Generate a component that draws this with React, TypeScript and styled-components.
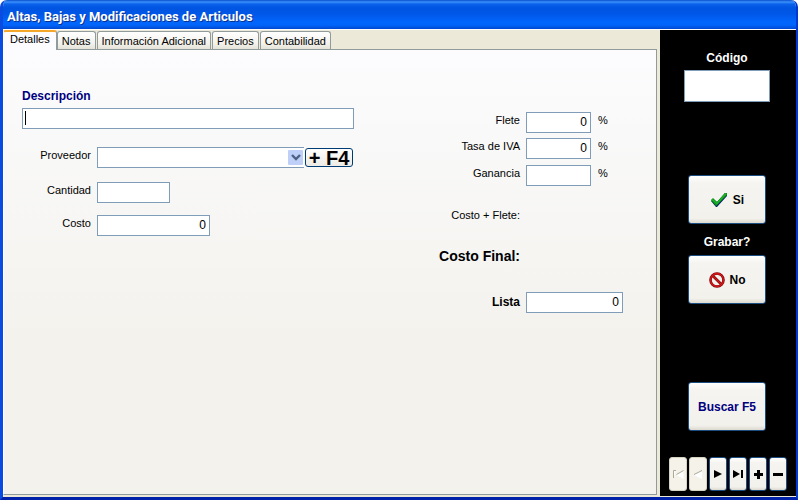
import React from "react";
import styled, { createGlobalStyle, css } from "styled-components";

const uiFont = '"Liberation Sans", Arial, sans-serif';
const line = "#7f9db9";

const Global = createGlobalStyle`
  *, *::before, *::after { box-sizing: border-box; }
  body { margin: 0; background: #fff; font: 12px/16px ${uiFont}; color: #000; }
  button, input, select { font: inherit; color: inherit; }
`;

const Window = styled.div`
  display: flex;
  flex-direction: column;
  min-height: calc(100vh - 1px);
  border: solid #0038d8;
  border-width: 0 2px 3px 3px;
  border-left-color: #0a4be0;
  border-bottom-color: #0022a8;
  border-radius: 7px 7px 0 0;
  background: #ece9d8;
  overflow: hidden;
`;

const TitleBar = styled.header`
  height: 29px;
  margin: 0 -2px 0 -3px;
  padding: 4px 7px 0;
  background: linear-gradient(
    #0a4fd0 0,
    #3c91fa 2px,
    #0b62ec 4px,
    #0055e0 8px,
    #0057e8 14px,
    #0266fc 22px,
    #0265fb 25px,
    #0048d0 29px
  );
`;

const Title = styled.h1`
  margin: 0;
  font: bold 13px/25px Roboto, "Noto Sans", sans-serif;
  color: #fff;
  text-shadow: 1px 1px 0 #0a2f8c;
  white-space: nowrap;
`;

const Body = styled.div`
  flex: 1;
  display: flex;
  gap: 3px;
  border-top: 1px solid #fff;
`;

const Main = styled.main`
  flex: 1;
  min-width: 0;
  display: flex;
  flex-direction: column;
  padding-bottom: 2px;
`;

const TabList = styled.div`
  display: flex;
  align-items: flex-end;
  height: 19px;
  gap: 1px;
`;

const Tab = styled.button<{ $active?: boolean }>`
  height: 18px;
  padding: 2px 4px 0;
  border: 1px solid #919b9c;
  border-bottom: 0;
  border-radius: 3px 3px 0 0;
  background: linear-gradient(#fff, #f2f1ea 70%, #e4e2d8);
  font-size: 11px;
  line-height: 15px;
  white-space: nowrap;
  ${(p) =>
    p.$active &&
    css`
      height: 20px;
      margin: 0 -1px -1px 0;
      padding: 0 6px 3px;
      border-top: 2px solid #f5a72c;
      border-left-color: #fff;
      background: #fcfcfe;
      z-index: 1;
    `}
`;

const Panel = styled.form`
  flex: 1;
  display: flex;
  justify-content: space-between;
  align-items: flex-start;
  gap: 24px;
  padding: 37px 33px 24px 18px;
  border: 1px solid #919b9c;
  border-left-color: #fff;
  background: linear-gradient(#fcfcfe, #f3f2ed 65%, #f3f2ec);
`;

const LeftColumn = styled.div`
  flex: 0 1 332px;
  min-width: 0;
`;

const RightColumn = styled.div`
  padding-top: 25px;
`;

const Heading = styled.label`
  display: block;
  margin-bottom: 3px;
  line-height: 18px;
  font-weight: bold;
  color: #000080;
`;

const Input = styled.input<{ $width?: number; $caret?: boolean }>`
  display: block;
  width: ${(p) => (p.$width ? `${p.$width}px` : "100%")};
  height: 21px;
  padding: 0 3px 2px;
  border: 1px solid ${line};
  border-radius: 0;
  background: #fff;
  text-align: right;
  outline: 0;
  ${(p) =>
    p.$caret &&
    css`
      text-align: left;
      background: linear-gradient(#000, #000) 2px 2px / 1px 14px no-repeat #fff;
    `}
`;

const Field = styled.div<{ $label: number; $space: number }>`
  display: grid;
  grid-template-columns: ${(p) => p.$label}px 1fr;
  column-gap: 6px;
  margin-top: ${(p) => p.$space}px;
`;

const Label = styled.label<{ $size?: "strong" | "large" }>`
  font-size: 11px;
  line-height: 16px;
  text-align: right;
  white-space: nowrap;
  ${(p) => p.$size && "font-size: 12px; font-weight: bold; line-height: 20px;"}
  ${(p) => p.$size === "large" && "font-size: 14px;"}
`;

const Line = styled.div`
  display: flex;
  align-items: flex-start;
`;

const Unit = styled.span`
  margin-left: 7px;
  font-size: 11px;
`;

const SelectBox = styled.div`
  position: relative;
  flex: 1;
  min-width: 0;
`;

const Select = styled.select`
  display: block;
  appearance: none;
  width: 100%;
  height: 21px;
  padding: 0 20px 0 3px;
  border: 1px solid ${line};
  border-right: 0;
  border-radius: 0;
  background: #fff;
  outline: 0;
`;

const Arrow = styled.svg`
  position: absolute;
  top: 3px;
  right: 1px;
  pointer-events: none;
`;

const KeyButton = styled.button`
  width: 48px;
  height: 19px;
  margin: 1px 1px 0;
  padding: 1px 0 0;
  border: 1px solid #003c74;
  border-radius: 3px;
  background: linear-gradient(#fff, #ecebe5);
  font-size: 20px;
  font-weight: bold;
  line-height: 16px;
  white-space: nowrap;
`;

const Sidebar = styled.aside`
  flex: 0 0 136px;
  display: flex;
  flex-direction: column;
  align-items: center;
  margin-bottom: 1px;
  padding: 19px 2px 5px 0;
  background: #000;
  color: #fff;
  font-weight: bold;
`;

const SideLabel = styled.label`
  line-height: 18px;
`;

const CodeInput = styled.input`
  width: 86px;
  height: 32px;
  margin: 3px 0 73px;
  padding: 0 4px;
  border: 1px solid ${line};
  background: #fff;
  color: #000;
  outline: 0;
`;

const Question = styled.div`
  margin: 9px 0 4px;
  line-height: 18px;
`;

const xpButton = css`
  border: 1px solid #1c4d80;
  border-radius: 3px;
  background: linear-gradient(#fff, #f5f4f0 15%, #f2f1ec 90%, #dcd9ce);
`;

const BigButton = styled.button<{ $search?: boolean }>`
  ${xpButton}
  display: flex;
  flex: none;
  align-items: center;
  justify-content: center;
  gap: 5px;
  width: 78px;
  height: 49px;
  padding: 0;
  margin-top: ${(p) => (p.$search ? "auto" : 0)};
  color: ${(p) => (p.$search ? "#000080" : "#000")};
  white-space: nowrap;
`;

const NavBar = styled.nav`
  display: flex;
  gap: 2px;
  margin: 26px -2px 0 0;
`;

const NavButton = styled.button`
  ${xpButton}
  display: flex;
  align-items: center;
  justify-content: center;
  width: 18px;
  height: 34px;
  padding: 0;
  &:disabled {
    border-color: #d5d2c4;
    background: #f4f2e9;
  }
`;

const navItems = [
  { name: "Primero", off: true, art: <path d="M4.5 6l7-4v8zM1.5 9V1.5H4" fill="#fff" /> },
  { name: "Anterior", off: true, art: <path d="M2 6l8-4v8z" fill="#fff" /> },
  { name: "Siguiente", art: <path d="M2 1l8 4-8 4z" /> },
  { name: "Último", art: <path d="M1 1l7 4-7 4zM9 1h2v8H9z" /> },
  { name: "Agregar", art: <path d="M5 1h3v3h3v3H8v3H5V7H2V4h3z" /> },
  { name: "Quitar", art: <path d="M1 4h10v3H1z" /> },
];

const shade: Record<string, string> = {
  Primero: "M1.5 9V1.5H4M4.5 5.5l7-4",
  Anterior: "M2 5.5l8-4",
};

const CheckIcon = () => (
  <svg width="18" height="16" viewBox="0 0 18 16" aria-hidden="true">
    <path d="M1 9l2-2 4 3 8-9 2 1v2L7 15H6z" fill="#0a2468" />
    <path d="M1 8l2-2 4 4 8-9h2v2L6 14z" fill="#0a9414" />
    <path d="M2 7.500l5 4 9-10" fill="none" stroke="#1cb426" strokeWidth="1.500" />
  </svg>
);

const NoIcon = () => (
  <svg width="16" height="16" viewBox="0 0 16 16" aria-hidden="true">
    <circle cx="8" cy="8" r="6.5" fill="none" stroke="#7c0a0a" strokeWidth="2.6" />
    <path d="M4 4l8 8" stroke="#7c0a0a" strokeWidth="2.6" />
    <circle cx="8" cy="8" r="6.5" fill="none" stroke="#d5161a" strokeWidth="1.4" />
    <path d="M4 4l8 8" stroke="#d5161a" strokeWidth="1.2" />
  </svg>
);

const tabs = ["Detalles", "Notas", "Información Adicional", "Precios", "Contabilidad"];

const percentages = [
  { id: "flete", label: "Flete", value: "0", space: 0 },
  { id: "iva", label: "Tasa de IVA", value: "0", space: 5 },
  { id: "ganancia", label: "Ganancia", value: "", space: 6 },
];

export default function App() {
  return (
    <>
      <Global />
      <Window>
        <TitleBar>
          <Title>Altas, Bajas y Modificaciones de Articulos</Title>
        </TitleBar>
        <Body>
          <Main>
            <TabList role="tablist">
              {tabs.map((name, i) => (
                <Tab key={name} type="button" role="tab" aria-selected={i === 0} $active={i === 0}>
                  {name}
                </Tab>
              ))}
            </TabList>
            <Panel onSubmit={(e) => e.preventDefault()}>
              <LeftColumn>
                <Heading htmlFor="descripcion">Descripción</Heading>
                <Input id="descripcion" $caret />
                <Field $label={69} $space={18}>
                  <Label htmlFor="proveedor">Proveedor</Label>
                  <Line>
                    <SelectBox>
                      <Select id="proveedor" />
                      <Arrow width="15" height="15" viewBox="0 0 15 15" aria-hidden="true">
                        <rect width="15" height="15" rx="1" fill="#bfd0f8" />
                        <path d="M4 5l4 4 4-4" fill="none" stroke="#4d6185" strokeWidth="2.4" />
                      </Arrow>
                    </SelectBox>
                    <KeyButton type="button">+ F4</KeyButton>
                  </Line>
                </Field>
                <Field $label={69} $space={14}>
                  <Label htmlFor="cantidad">Cantidad</Label>
                  <Input id="cantidad" $width={73} />
                </Field>
                <Field $label={69} $space={12}>
                  <Label htmlFor="costo">Costo</Label>
                  <Input id="costo" $width={113} defaultValue="0" />
                </Field>
              </LeftColumn>
              <RightColumn>
                {percentages.map((p) => (
                  <Field key={p.id} $label={84} $space={p.space}>
                    <Label htmlFor={p.id}>{p.label}</Label>
                    <Line>
                      <Input id={p.id} $width={65} defaultValue={p.value} />
                      <Unit>%</Unit>
                    </Line>
                  </Field>
                ))}
                <Field $label={84} $space={21}>
                  <Label as="span">Costo + Flete:</Label>
                </Field>
                <Field $label={84} $space={23}>
                  <Label as="span" $size="large">Costo Final:</Label>
                </Field>
                <Field $label={84} $space={26}>
                  <Label htmlFor="lista" $size="strong">Lista</Label>
                  <Input id="lista" $width={97} defaultValue="0" />
                </Field>
              </RightColumn>
            </Panel>
          </Main>
          <Sidebar>
            <SideLabel htmlFor="codigo">Código</SideLabel>
            <CodeInput id="codigo" />
            <BigButton type="button">
              <CheckIcon />
              Si
            </BigButton>
            <Question>Grabar?</Question>
            <BigButton type="button">
              <NoIcon />
              No
            </BigButton>
            <BigButton type="button" $search>
              Buscar F5
            </BigButton>
            <NavBar aria-label="Registros">
              {navItems.map((n) => (
                <NavButton key={n.name} type="button" aria-label={n.name} disabled={n.off}>
                  <svg width="12" height="11" viewBox="0 0 12 11" aria-hidden="true">
                    {n.art}
                    {shade[n.name] && <path d={shade[n.name]} fill="none" stroke="#aca899" />}
                  </svg>
                </NavButton>
              ))}
            </NavBar>
          </Sidebar>
        </Body>
      </Window>
    </>
  );
}
